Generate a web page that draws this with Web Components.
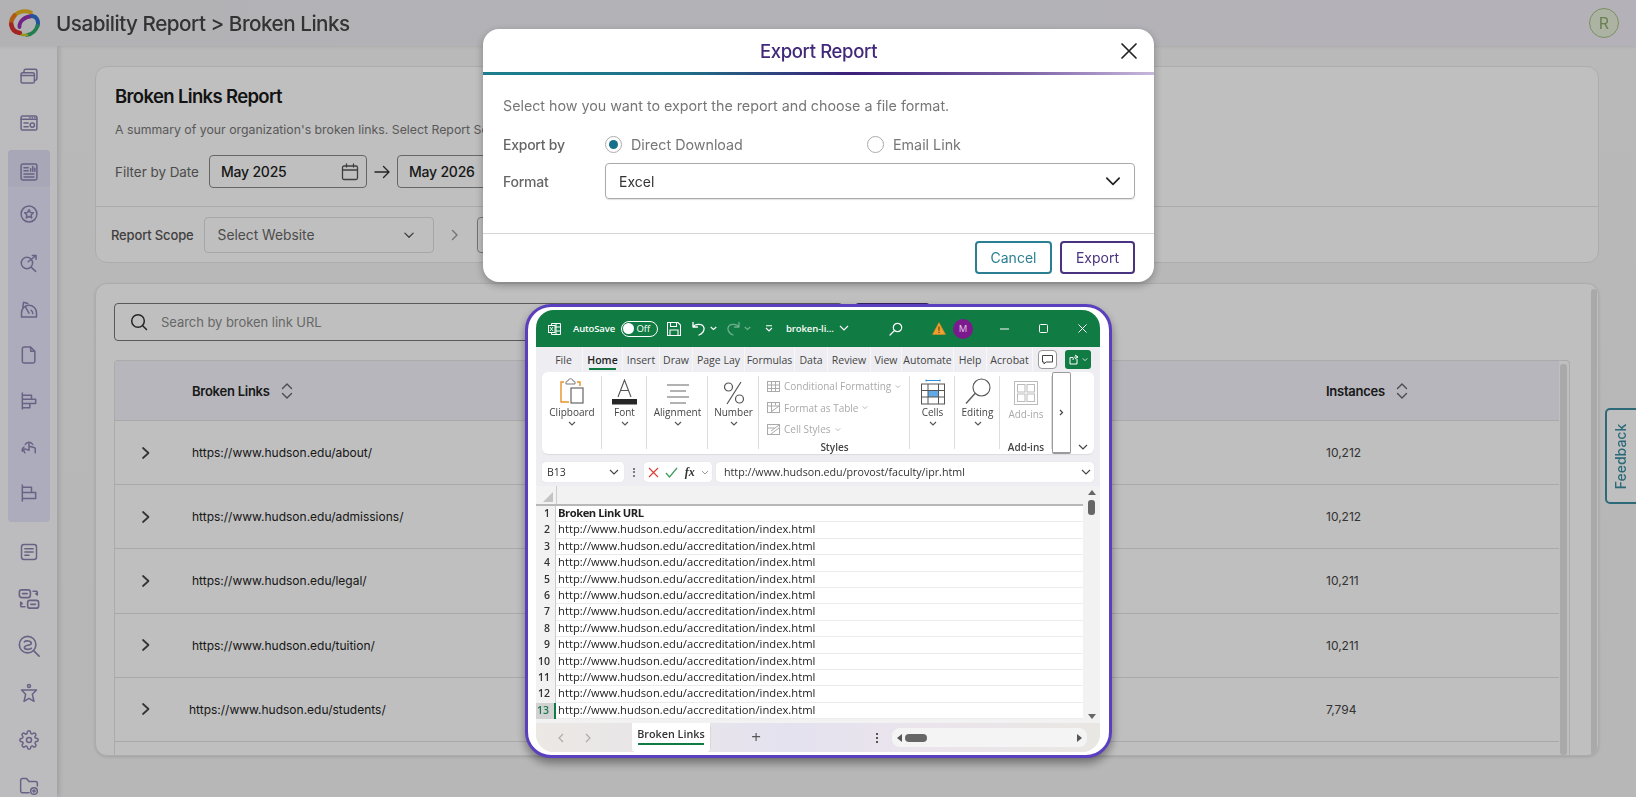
<!DOCTYPE html>
<html lang="en">
<head>
<meta charset="utf-8">
<title>Broken Links</title>
<style>
  html, body { margin: 0; height: 100%; overflow: hidden; background: #f7f7f7; font-family: Inter, "Liberation Sans", sans-serif; }
</style>
</head>
<body>
<app-shell>
  <app-header slot="header" heading="Usability Report &gt; Broken Links"></app-header>
  <side-nav slot="nav"></side-nav>
  <summary-card></summary-card>
  <table-card></table-card>
</app-shell>
<feedback-tab></feedback-tab>
<modal-backdrop>
  <export-modal></export-modal>
  <excel-preview></excel-preview>
</modal-backdrop>

<script>
// sidebar icons, all drawn on a 24 box
const NAV_ICONS = {
  stack: '<rect x="2.5" y="8" width="16" height="12.5" rx="2"/><path d="M2.5 11.5h16M6 8V6a2 2 0 0 1 2-2h11.5a2 2 0 0 1 2 2v9a2 2 0 0 1-2 2h-1"/>',
  panel: '<rect x="2.5" y="3.5" width="19" height="17" rx="2"/><path d="M2.5 7.5h19M6 12h5M6 16.5h5M13 5.5h.1M16 5.5h.1M19 5.5h.1"/><circle cx="16" cy="14.5" r="2.6"/>',
  report: '<rect x="2.5" y="2.5" width="19" height="19" rx="2"/><path d="M6 7h5M6 10.5h5M6 14.5h12M6 18h12M14 11V8M16.5 11V5.5M19 11V7.5"/>',
  starred: '<circle cx="12" cy="12" r="9.5"/><path d="M12 6.8l1.6 3.3 3.6.5-2.6 2.5.6 3.6-3.2-1.7-3.2 1.7.6-3.6-2.6-2.5 3.6-.5z"/>',
  seek: '<circle cx="9.500" cy="12" r="6.800"/><path d="M14.500 17l5.500 5M11 10.500L20.500 3M16 3h4.500v4.500"/>',
  gauge: '<path d="M3 21.500h18v-5a9 9 0 0 0-18 0zM12 17L8 10M16.500 17.500a4.500 4.500 0 0 0-2-4M4.500 10l1-6 5 1.500"/>',
  doc: '<path d="M6 2.5h8l5 5v12a2 2 0 0 1-2 2H6a2 2 0 0 1-2-2v-15a2 2 0 0 1 2-2zM14 2.5v5h5"/>',
  bars: '<path d="M4 2.500v19M4 5h11v5H4M4 10h16v5H4M4 15h9v5H4"/>',
  touch: '<path d="M7.500 9a5 5 0 0 1 9 0M12 7.500v8.500l-4-1.500c-2-.5-3 1-2 2.500l1 2M12 11l6 1.500a2 2 0 0 1 1.500 2v4.500M6 12c-1.500 1-2.500 3-2 5"/>',
  lines: '<path d="M4 2.500v19M4 5h11v6.500H4M4 11.500h16v7H4"/>',
  note: '<rect x="3" y="3" width="18" height="18" rx="3"/><path d="M7 8h10M7 12h10M7 16h5"/>',
  swap: '<rect x="1.500" y="2" width="12" height="8.500" rx="2.500"/><rect x="10.500" y="13.500" width="12" height="8.500" rx="2.500"/><path d="M5 6.200h5M14 17.800h5M16.500 3.500h3.500a1 1 0 0 1 1 1v3l-1.500-1.300M7.500 20.500H4a1 1 0 0 1-1-1v-4l1.500 1.500"/>',
  searchs: '<circle cx="10.500" cy="10.500" r="9"/><path d="M17 17l6 6M7 7.500c1-1.500 7.500-1.500 7.500 1.500S7 10.500 7 13.500s6.500 2.500 7.500 1"/>',
  person: '<circle cx="12" cy="3.500" r="1.800"/><path d="M3 8.500h18l-5 5 2 8.500-6-3.500L6 22l2-8.500z"/>',
  gear: '<circle cx="12" cy="12" r="3"/><path d="M19.400 15a1.650 1.650 0 0 0 .33 1.820l.06.06a2 2 0 0 1-2.830 2.830l-.06-.06a1.650 1.650 0 0 0-2.820 1.180V21a2 2 0 0 1-4 0v-.09a1.650 1.650 0 0 0-2.820-1.180l-.06.06a2 2 0 0 1-2.830-2.830l.06-.06a1.650 1.650 0 0 0-1.180-2.820H3a2 2 0 0 1 0-4h.09a1.650 1.650 0 0 0 1.180-2.820l-.06-.06a2 2 0 0 1 2.830-2.830l.06.06A1.650 1.650 0 0 0 9.920 3.090V3a2 2 0 0 1 4 0v.09a1.650 1.650 0 0 0 2.820 1.180l.06-.06a2 2 0 0 1 2.830 2.830l-.06.06a1.650 1.650 0 0 0 1.180 2.820H21a2 2 0 0 1 0 4h-.09a1.650 1.650 0 0 0-1.510 1z"/>',
  folder: '<path d="M12 20H4a2 2 0 0 1-2-2V5a2 2 0 0 1 2-2h5l3 3.500h8a2 2 0 0 1 2 2V12"/><circle cx="18" cy="18" r="4"/><circle cx="18" cy="18" r="1.300"/>'
};

function navIcon(name, size) {
  return `<svg width="${size}" height="${size}" viewBox="0 0 24 24" fill="none" stroke="currentColor" stroke-width="1.8" stroke-linecap="round" stroke-linejoin="round">${NAV_ICONS[name]}</svg>`;
}

const chevronDown = (w, color, sw) => `<svg width="${w}" height="${w}" viewBox="0 0 16 16" fill="none" stroke="${color}" stroke-width="${sw}" stroke-linecap="round" stroke-linejoin="round"><path d="M2.500 5.500L8 11l5.500-5.500"/></svg>`;
const sortIcon = `<svg width="14" height="18" viewBox="0 0 14 18" fill="none" stroke="#666" stroke-width="1.400" stroke-linecap="round" stroke-linejoin="round"><path d="M2.500 6.500L7 2l4.500 4.500M2.500 11.500L7 16l4.500-4.500"/></svg>`;

class AppShell extends HTMLElement {
  constructor() {
    super();
    this.attachShadow({ mode: 'open' });
    this.shadowRoot.innerHTML = `
      <style>
        :host { display: grid; grid-template-columns: 57px 1fr; grid-template-rows: 46px 1fr; height: 797px; width: 1636px; filter: blur(.4px); }
        .top { grid-column: 1 / 3; position: relative; z-index: 1; }
        .nav { box-shadow: 2px 0 5px rgba(0,0,0,.14); position: relative; }
        main { padding: 20px 37px 0 38px; display: flex; flex-direction: column; gap: 20px; min-width: 0; overflow: hidden;
               background: linear-gradient(180deg, #f7f7f7, #f4f4f4); }
      </style>
      <div class="top"><slot name="header"></slot></div>
      <div class="nav"><slot name="nav"></slot></div>
      <main><slot></slot></main>`;
  }
}

class AppHeader extends HTMLElement {
  constructor() {
    super();
    this.attachShadow({ mode: 'open' });
  }
  connectedCallback() {
    this.shadowRoot.innerHTML = `
      <style>
        :host { display: flex; align-items: center; height: 46px; padding: 0 17px 0 8px; box-sizing: border-box;
                background: linear-gradient(90deg, #eeeef2, #f0eef6); box-shadow: 0 1px 3px rgba(0,0,0,.08); position: relative; }
        svg.logo { flex: none; }
        h1 { margin: 0 0 0 15px; font: 500 20.700px Inter, sans-serif; letter-spacing: -.5px; color: #444; flex: 1; }
        .avatar { width: 30px; height: 30px; box-sizing: border-box; border-radius: 50%; border: 1.500px solid #a3bd85; background: #e6efd9; color: #8eaa6e;
                  display: flex; align-items: center; justify-content: center; font: 400 16px Inter, sans-serif; }
      </style>
      <svg class="logo" width="33" height="30" viewBox="0 0 33 30" fill="none" stroke-linecap="round">
        <path d="M23 4.500C17 2 10 3.500 6.500 7.500" stroke="#e8b420" stroke-width="4"/>
        <path d="M6.500 7.500C4 10.500 2.800 13.500 3.200 16.500" stroke="#ea7a1e" stroke-width="4.500"/>
        <path d="M3.200 16.500C4 21 7 24.500 12 25" stroke="#d9322e" stroke-width="4.500"/>
        <path d="M11.500 19C11 13 17 8.500 24 8" stroke="#9a2fb0" stroke-width="3.800"/>
        <path d="M24 8C29 8.500 31 13 29.500 18" stroke="#2f6fd0" stroke-width="4"/>
        <path d="M29.500 18C28 22.500 24.500 26 19 27" stroke="#2fa868" stroke-width="3.800"/>
        <path d="M19 27L14 27" stroke="#c8c82a" stroke-width="2.500"/>
      </svg>
      <h1>${this.getAttribute('heading')}</h1>
      <div class="avatar">R</div>`;
  }
}

class SideNav extends HTMLElement {
  constructor() {
    super();
    this.attachShadow({ mode: 'open' });
  }
  connectedCallback() {
    const item = (n, s) => `<div class="item">${navIcon(n, s || 20)}</div>`;
    this.shadowRoot.innerHTML = `
      <style>
        :host { display: flex; flex-direction: column; align-items: center; height: 751px; box-sizing: border-box; padding-top: 7px; background: #fbfbfe; color: #8d83b1; overflow: hidden; }
        .item { height: 46.500px; width: 100%; display: flex; align-items: center; justify-content: center; flex: none; }
        .group { width: 42px; margin: 4px 0 7px; height: 372px; background: #e6e6fb; border-radius: 4px; display: flex; flex-direction: column; overflow: hidden; flex: none; }
        .group .item { height: 46px; }
        .group .item:first-child { height: 38px; padding-top: 6px; background: #dfdff5; border-bottom: 1px solid #e9e9f3; box-sizing: border-box; }
        .group .item:nth-child(2) { height: 52px; }
        .tail { width: 100%; display: flex; flex-direction: column; }
        .tail .item { height: 46.800px; }
      </style>
      ${item('stack')}${item('panel')}
      <div class="group">
        ${item('report')}${item('starred')}${item('seek')}${item('gauge')}${item('doc')}${item('bars')}${item('touch')}${item('lines')}
      </div>
      <div class="tail">
        ${item('note')}${item('swap', 22)}${item('searchs', 22)}${item('person')}${item('gear')}${item('folder')}
      </div>`;
  }
}

class SummaryCard extends HTMLElement {
  constructor() {
    super();
    this.attachShadow({ mode: 'open' });
    const cal = `<svg width="18" height="18" viewBox="0 0 18 18" fill="none" stroke="#555" stroke-width="1.300" stroke-linecap="round"><rect x="1.500" y="3" width="15" height="13.500" rx="1.500"/><path d="M1.500 7h15M5.500 1v3M12.500 1v3"/></svg>`;
    this.shadowRoot.innerHTML = `
      <style>
        :host { display: block; height: 197px; box-sizing: border-box; background: #fff; border: 1px solid #e6e6e6; border-radius: 12px; font-family: Inter, sans-serif; color: #222; flex: none; overflow: hidden; }
        .top { height: 140px; box-sizing: border-box; padding: 17px 0 0 19px; border-bottom: 1px solid #e3e3e3; }
        h2 { margin: 0; font: 600 18.500px/25px Inter, sans-serif; letter-spacing: -.65px; color: #1a1a1a; }
        p { margin: 12px 0 0; font-size: 12.300px; line-height: 18px; color: #777; white-space: nowrap; }
        .filter { display: flex; align-items: center; margin-top: 16px; font-size: 13.400px; color: #666; }
        .date { height: 33px; box-sizing: border-box; width: 158px; margin-left: 10px; border: 1.500px solid #8a8a8a; border-radius: 4px; display: flex; align-items: center; justify-content: space-between; padding: 0 7px 0 11px; color: #222; font-weight: 500; font-size: 14px; letter-spacing: -.2px; }
        .arrow { margin: 0 7px; display: flex; }
        .filter .date + .arrow + .date { margin-left: 0; }
        .scope { display: flex; align-items: center; height: 56px; padding-left: 15px; font-size: 13px; font-weight: 500; color: #555; letter-spacing: -.15px; }
        .sel { height: 36px; box-sizing: border-box; width: 230px; margin-left: 10px; border: 1px solid #dedede; border-radius: 4px; display: flex; align-items: center; justify-content: space-between; padding: 0 18px 0 13px; font-weight: 400; font-size: 13.800px; color: #666; letter-spacing: 0; }
        .crumb { margin: 0 18px 0 17px; color: #aaa; display: flex; }
        .next { width: 230px; height: 36px; box-sizing: border-box; border: 1.500px solid #999; border-radius: 4px; }
      </style>
      <div class="top">
        <h2>Broken Links Report</h2>
        <p>A summary of your organization's broken links. Select Report Scope to narrow down the results.</p>
        <div class="filter">Filter by Date
          <div class="date">May 2025 ${cal}</div>
          <div class="arrow"><svg width="16" height="14" viewBox="0 0 16 14" fill="none" stroke="#333" stroke-width="1.400" stroke-linecap="round" stroke-linejoin="round"><path d="M1 7h14M9.500 1.500L15 7l-5.500 5.500"/></svg></div>
          <div class="date">May 2026 ${cal}</div>
        </div>
      </div>
      <div class="scope">Report Scope
        <div class="sel">Select Website ${chevronDown(12, '#555', 1.800)}</div>
        <div class="crumb"><svg width="8" height="12" viewBox="0 0 8 12" fill="none" stroke="#999" stroke-width="1.300" stroke-linecap="round"><path d="M1.500 1.500L6 6l-4.500 4.500"/></svg></div>
        <div class="next"></div>
      </div>`;
  }
}

const LINK_ROWS = [
  ['https://www.hudson.edu/about/', '10,212'],
  ['https://www.hudson.edu/admissions/', '10,212'],
  ['https://www.hudson.edu/legal/', '10,211'],
  ['https://www.hudson.edu/tuition/', '10,211'],
  ['https://www.hudson.edu/students/', '7,794']
];

class TableCard extends HTMLElement {
  constructor() {
    super();
    this.attachShadow({ mode: 'open' });
  }
  connectedCallback() {
    const rows = LINK_ROWS.map((r, i) => `
      <div class="row">
        <span class="chev"><svg width="10" height="14" viewBox="0 0 10 14" fill="none" stroke="#444" stroke-width="1.700" stroke-linecap="round" stroke-linejoin="round"><path d="M2 2l5.500 5L2 12"/></svg></span>
        <span class="url${i === 4 ? ' shift' : ''}">${r[0]}</span>
        <span class="num">${r[1]}</span>
      </div>`).join('');
    this.shadowRoot.innerHTML = `
      <style>
        :host { display: flex; height: 473px; box-sizing: border-box; background: #fff; border: 1px solid #e6e6e6; border-radius: 12px; font-family: Inter, sans-serif; overflow: hidden; flex: none; box-shadow: 0 1px 3px rgba(0,0,0,.12); }
        .body { flex: 1; min-width: 0; padding: 19px 21px 0 18px; display: flex; flex-direction: column; }
        .bar { width: 6px; margin: 5px 1px 0 0; background: #e2e2e2; border-radius: 3px; }
        .tools { display: flex; height: 38px; flex: none; }
        .search { width: 729px; box-sizing: border-box; border: 1.500px solid #777; border-radius: 4px; display: flex; align-items: center; padding-left: 15px; gap: 13px; font-size: 13px; letter-spacing: -.05px; color: #8a8a8a; }
        .action { width: 75px; margin-left: 12px; box-sizing: border-box; border: 2px solid #49327f; border-radius: 4px; }
        .table { margin-top: 19px; flex: 1; min-height: 0; display: flex; border: 1px solid #e4e4e4; border-bottom: 0; border-radius: 4px 4px 0 0; overflow: hidden; }
        .rows { flex: 1; min-width: 0; }
        .tbar { width: 7px; margin: 3px 2px 0 1px; background: #e2e2e2; border-radius: 3px; }
        .row, .head { display: grid; grid-template-columns: 77px 1fr 233px; align-items: center; border-bottom: 1px solid #e2e2e2; box-sizing: border-box; }
        .head { height: 60px; background: #f3f3fb; font-weight: 600; font-size: 13px; letter-spacing: -.25px; color: #222; }
        .head span { display: flex; align-items: center; gap: 10px; }
        .head .first { grid-column: 2; }
        .row { height: 64.200px; font-size: 12px; letter-spacing: 0; color: #222; }
        .chev { padding-left: 26px; display: flex; }
        .shift { margin-left: -3px; }
        .num { color: #444; }
      </style>
      <div class="body">
        <div class="tools">
          <div class="search"><svg width="18" height="18" viewBox="0 0 18 18" fill="none" stroke="#333" stroke-width="1.500" stroke-linecap="round"><circle cx="8" cy="8" r="6.300"/><path d="M12.700 12.700L16.500 16.500"/></svg>Search by broken link URL</div>
          <div class="action"></div>
        </div>
        <div class="table">
          <div class="rows">
            <div class="head"><span class="first">Broken Links ${sortIcon}</span><span>Instances ${sortIcon}</span></div>
            ${rows}
            <div class="row"></div>
          </div>
          <div class="tbar"></div>
        </div>
      </div>
      <div class="bar"></div>`;
  }
}

class FeedbackTab extends HTMLElement {
  constructor() {
    super();
    this.attachShadow({ mode: 'open' });
    this.shadowRoot.innerHTML = `
      <style>
        :host { position: absolute; left: 1605px; top: 408px; width: 33px; height: 96px; box-sizing: border-box; background: #fff; border: 2px solid #3b8ea3; border-radius: 5px 0 0 5px;
                display: flex; align-items: center; justify-content: center; font: 500 14px Inter, sans-serif; color: #3b8ea3; filter: blur(.3px); }
        span { transform: rotate(-90deg); white-space: nowrap; margin-left: -1px; }
      </style>
      <span>Feedback</span>`;
  }
}

class ModalBackdrop extends HTMLElement {
  constructor() {
    super();
    this.attachShadow({ mode: 'open' });
    this.shadowRoot.innerHTML = `
      <style>:host { position: absolute; inset: 0; background: rgba(0,0,0,.25); }</style>
      <slot></slot>`;
  }
}

class ExportModal extends HTMLElement {
  constructor() {
    super();
    this.attachShadow({ mode: 'open' });
    this.shadowRoot.innerHTML = `
      <style>
        :host { position: absolute; left: 483px; top: 29px; width: 671px; height: 253px; background: #fff; border-radius: 16px; box-shadow: 0 3px 8px rgba(0,0,0,.3); overflow: hidden; font-family: Inter, sans-serif; display: flex; flex-direction: column; }
        header { height: 43px; flex: none; display: flex; align-items: center; justify-content: center; position: relative; font-weight: 500; font-size: 18.500px; letter-spacing: -.35px; color: #41287a; }
        .x { position: absolute; right: 16px; top: 13px; display: flex; }
        .rule { height: 3px; flex: none; background: linear-gradient(90deg, #1d7f8d 0%, #1f6f86 30%, #3c1f7a 55%, #7a5fa5 80%, #c8b8dc 100%); }
        .body { flex: 1; padding: 19px 19px 0 20px; color: #777; font-size: 14.300px; }
        .intro { line-height: 24px; letter-spacing: -.02px; }
        .line { display: grid; grid-template-columns: 102px 262px 1fr; align-items: center; margin-top: 12px; height: 28px; }
        .label { font-weight: 500; font-size: 14px; color: #666; letter-spacing: -.25px; }
        .opt { display: flex; align-items: center; gap: 9px; }
        .dot { width: 17px; height: 17px; box-sizing: border-box; border: 1.500px solid #aaa; border-radius: 50%; display: flex; align-items: center; justify-content: center; background: #fff; }
        .dot.on::after { content: ""; width: 9px; height: 9px; border-radius: 50%; background: #17708a; }
        .format { display: grid; grid-template-columns: 102px 1fr; align-items: center; margin-top: 5px; }
        .select { height: 36px; box-sizing: border-box; border: 1.500px solid #aaa; border-radius: 4px; display: flex; align-items: center; justify-content: space-between; padding: 0 12px 0 13px; color: #333; font-size: 14px; box-shadow: 0 1px 1px rgba(0,0,0,.12); }
        footer { height: 49px; flex: none; box-sizing: border-box; border-top: 1.500px solid #d5d5d5; display: flex; justify-content: flex-end; align-items: flex-start; padding: 7px 19px 0 0; gap: 8px; }
        .btn { height: 33px; box-sizing: border-box; border-radius: 4px; display: flex; align-items: center; justify-content: center; font-size: 14px; }
        .cancel { width: 77px; border: 2px solid #2c7f93; color: #2c7f93; }
        .export { width: 75px; border: 2px solid #49327f; color: #49327f; }
      </style>
      <header>Export Report
        <span class="x"><svg width="18" height="18" viewBox="0 0 18 18" stroke="#222" stroke-width="1.700" stroke-linecap="round"><path d="M2 2l14 14M16 2L2 16"/></svg></span>
      </header>
      <div class="rule"></div>
      <div class="body">
        <div class="intro">Select how you want to export the report and choose a file format.</div>
        <div class="line">
          <span class="label">Export by</span>
          <span class="opt"><i class="dot on"></i>Direct Download</span>
          <span class="opt"><i class="dot"></i>Email Link</span>
        </div>
        <div class="format">
          <span class="label">Format</span>
          <div class="select">Excel ${chevronDown(18, '#222', 1.500)}</div>
        </div>
      </div>
      <footer><div class="btn cancel">Cancel</div><div class="btn export">Export</div></footer>`;
  }
}

class ExcelPreview extends HTMLElement {
  constructor() {
    super();
    this.attachShadow({ mode: 'open' });
  }
  connectedCallback() {
    const url = 'http://www.hudson.edu/accreditation/index.html';
    let rows = `<div class="r"><span class="n">1</span><span class="c"><b>Broken Link URL</b></span></div>`;
    for (let i = 2; i <= 13; i++) {
      rows += `<div class="r${i === 13 ? ' sel' : ''}"><span class="n">${i}</span><span class="c">${url}</span></div>`;
    }
    const caret = `<svg width="8" height="5" viewBox="0 0 8 5" fill="none" stroke="#555" stroke-width="1.100"><path d="M1 1l3 3 3-3"/></svg>`;
    const tabs = ['File', 'Home', 'Insert', 'Draw', 'Page Lay', 'Formulas', 'Data', 'Review', 'View', 'Automate', 'Help', 'Acrobat'];
    const tabW = [38, 40, 37, 33, 52, 50, 33, 43, 31, 52, 33, 46];
    this.shadowRoot.innerHTML = `
      <style>
        :host { position: absolute; left: 525px; top: 304px; width: 587px; height: 454px; box-sizing: border-box; background: #fff; border: 3px solid #5a3fbe; border-radius: 26px; padding: 3px 9px 3px 8px; box-shadow: 0 5px 10px rgba(0,0,0,.4); font-family: "Open Sans", sans-serif; font-size: 10.500px; color: #333; }
        .win { height: 100%; background: #eeeef2; border-radius: 18px; overflow: hidden; display: flex; flex-direction: column; }
        .title { height: 37px; flex: none; background: #107b43; color: #fff; display: flex; align-items: center; padding-left: 12px; position: relative; }
        .title > * { flex: none; }
        .auto { margin-left: 12px; font-weight: 600; font-size: 9.500px; letter-spacing: -.15px; }
        .toggle { margin-left: 6px; width: 37px; height: 16px; box-sizing: border-box; border: 1.300px solid #fff; border-radius: 9px; display: flex; align-items: center; padding-left: 1.500px; gap: 2px; font-size: 9.500px; }
        .toggle i { width: 11px; height: 11px; border-radius: 50%; background: #fff; }
        .fname { margin-left: 13px; font-weight: 600; width: 52px; font-size: 9.500px; letter-spacing: -.1px; white-space: nowrap; }
        .tabs { height: 25px; flex: none; display: flex; align-items: center; padding-left: 9px; position: relative; font-size: 10.500px; }
        .tab { height: 25px; display: flex; align-items: center; justify-content: center; position: relative; border-right: 1px solid #f7f7f9; box-sizing: border-box; color: #444; white-space: nowrap; overflow: hidden; flex: none; }
        .tab.on { color: #222; font-weight: 600; }
        .tab.on::after { content: ""; position: absolute; left: 6px; right: 6px; bottom: 2px; height: 2px; background: #107b43; }
        .cmt { margin-left: 5px; width: 19px; height: 19px; box-sizing: border-box; background: #fff; border: 1px solid #999; border-radius: 4px; display: flex; align-items: center; justify-content: center; flex: none; }
        .share { margin-left: 8px; width: 26px; height: 19px; background: #107b43; border-radius: 3px; display: flex; align-items: center; justify-content: center; gap: 2px; flex: none; }
        .ribbon { margin: 0 6px; height: 82px; flex: none; background: #fff; border-radius: 6px; display: flex; box-shadow: 0 1px 1px rgba(0,0,0,.08); position: relative; font-size: 10px; }
        .grp { display: flex; flex-direction: column; align-items: center; position: relative; flex: none; }
        .grp::after { content: ""; position: absolute; right: 0; top: 4px; bottom: 5px; width: 1px; background: #dcdcdc; }
        .grp .ic { height: 30px; margin-top: 3px; display: flex; align-items: flex-end; justify-content: center; }
        .grp .lb { margin-top: 0; line-height: 14px; color: #444; }
        .grp .cr { margin-top: 2px; display: flex; }
        .styles { align-items: flex-start; padding-left: 8px; color: #aaa; gap: 5.500px; padding-top: 6px; box-sizing: border-box; }
        .styles .rw { display: flex; align-items: center; gap: 4px; height: 16px; white-space: nowrap; }
        .tag { position: absolute; bottom: 0; left: 0; right: 0; text-align: center; font-weight: 600; color: #444; line-height: 14px; }
        .more { width: 19px; flex: none; box-sizing: border-box; border: 1px solid #9a9a9a; border-bottom-width: 2px; border-radius: 2px; display: flex; align-items: center; justify-content: center; }
        .coll { flex: 1; display: flex; align-items: flex-end; justify-content: center; padding-bottom: 3px; }
        .fbar { margin: 8px 6px 0; height: 20px; flex: none; display: flex; gap: 4px; align-items: stretch; font-size: 10.500px; }
        .box { background: #fff; border-radius: 4px; display: flex; align-items: center; box-shadow: 0 0 1px rgba(0,0,0,.15); box-sizing: border-box; }
        .dots { width: 8px; display: flex; flex-direction: column; align-items: center; justify-content: center; gap: 1.500px; margin: 0 2px; }
        .dots i { width: 2px; height: 2px; background: #555; border-radius: 50%; }
        .sheet { flex: 1; min-height: 0; margin-top: 4px; display: flex; background: #f2f2f2; }
        .cells { flex: none; width: 547px; display: flex; flex-direction: column; overflow: hidden; }
        .colh { height: 20px; flex: none; display: flex; border-bottom: 2px solid #b8b8b8; box-sizing: border-box; }
        .corner { width: 20px; border-right: 1px solid #ccc; position: relative; }
        .corner::after { content: ""; position: absolute; right: 3px; bottom: 2px; border-style: solid; border-width: 0 0 10px 10px; border-color: transparent transparent #c4c4c4 transparent; }
        .r { height: 16.400px; flex: none; display: flex; box-sizing: border-box; font-size: 11.200px; line-height: 14.500px; color: #222; font-family: "Open Sans", sans-serif; }
        .n { width: 20px; flex: none; text-align: right; padding-right: 5px; box-sizing: border-box; background: #f2f2f2; font-weight: 600; font-size: 10.500px; color: #333; border-right: 1px solid #ccc; }
        .c { flex: 1; background: #fff; padding-left: 2px; border-bottom: 1.500px solid #ececec; letter-spacing: .03px; white-space: nowrap; }
        .c b { font-weight: 700; letter-spacing: -.45px; }
        .sel .n { background: #d2d2d2; color: #1d7a4a; border-right: 2px solid #107b43; }
        .vs { flex: 1; position: relative; display: flex; flex-direction: column; align-items: center; }
        .up, .dn { width: 0; height: 0; border-left: 4px solid transparent; border-right: 4px solid transparent; }
        .up { margin-top: 4px; border-bottom: 5px solid #666; }
        .dn { border-top: 5px solid #666; margin-top: 199px; }
        .thumb { width: 7px; height: 15px; margin-top: 5px; background: #666; border-radius: 3px; }
        .foot { height: 29px; flex: none; display: flex; align-items: stretch; background: linear-gradient(90deg, #ece8e4, #e4e2ef 45%, #ebe4ec 70%, #e9e7e2); position: relative; }
        .nav { width: 96px; flex: none; display: flex; align-items: center; gap: 21px; padding-left: 22px; box-sizing: border-box; }
        .stab { width: 78px; flex: none; background: #fff; border-radius: 0 0 4px 4px; display: flex; flex-direction: column; align-items: center; font-weight: 600; font-size: 10.800px; color: #333; padding-top: 3px; box-sizing: border-box; line-height: 16px; }
        .stab i { width: 66px; height: 2px; background: #107b43; margin-top: 1px; }
        .plus { width: 91px; flex: none; text-align: center; font-size: 17px; color: #555; border-left: 1px solid #d8d8d8; margin: 3px 0; line-height: 22px; box-sizing: border-box; }
        .vd { flex: none; margin-left: 75px; display: flex; flex-direction: column; justify-content: center; gap: 2px; }
        .vd i { width: 2px; height: 2px; background: #555; }
        .hs { margin: 5px 0 5px 14px; width: 195px; flex: none; background: #f4f4f4; border-radius: 8px; display: flex; align-items: center; padding: 0 5px; box-sizing: border-box; }
        .hs .l { border-style: solid; border-width: 4px 5px 4px 0; border-color: transparent #555 transparent transparent; }
        .hs .t { width: 22px; height: 8px; background: #666; border-radius: 4px; margin-left: 3px; }
        .hs .rr { margin-left: auto; border-style: solid; border-width: 4px 0 4px 5px; border-color: transparent transparent transparent #555; }
      </style>
      <div class="win">
        <div class="title">
          <svg width="13" height="14" viewBox="0 0 13 14" fill="none" stroke="#fff" stroke-width="1"><path d="M3.500 3V1.500h9v11h-9V11M8 1.500V12.500M3.500 5h9M8 9h4.500"/><rect x=".5" y="3.500" width="6.500" height="7" fill="#107b43"/><path d="M2 5l3 4M5 5L2 9" stroke-width=".9"/></svg>
          <span class="auto">AutoSave</span>
          <span class="toggle"><i></i>Off</span>
          <svg style="margin-left:9px" width="14" height="14" viewBox="0 0 14 14" fill="none" stroke="#fff" stroke-width="1.100"><path d="M.5 .5h10.500l2.500 2.500v10.500H.5zM3.500 .5v4h6v-4M3 13.500V8h8v5.500"/></svg>
          <svg style="margin-left:11px" width="13" height="15" viewBox="0 0 13 15" fill="none" stroke="#fff" stroke-width="1.300" stroke-linecap="round" stroke-linejoin="round"><path d="M1 1.500v4.500h4.500M1 6c2-3.500 10-4 11 1 .5 3-2 6-5 7"/></svg>
          <svg style="margin-left:5px" width="7" height="5" viewBox="0 0 7 5" fill="none" stroke="#fff" stroke-width="1.200"><path d="M.7 1l2.800 2.500L6.300 1"/></svg>
          <svg style="margin-left:10px;opacity:.4" width="13" height="15" viewBox="0 0 13 15" fill="none" stroke="#fff" stroke-width="1.300" stroke-linecap="round" stroke-linejoin="round"><path d="M12 1.500v4.500H7.500M12 6C10 2.500 2 2 1 7c-.5 3 2 6 5 7"/></svg>
          <svg style="margin-left:4px;opacity:.4" width="7" height="5" viewBox="0 0 7 5" fill="none" stroke="#fff" stroke-width="1.200"><path d="M.7 1l2.800 2.500L6.300 1"/></svg>
          <svg style="margin-left:14px" width="8" height="7" viewBox="0 0 8 7" fill="none" stroke="#fff" stroke-width="1.100"><path d="M1 .8h6M1 3l3 3 3-3"/></svg>
          <span class="fname">broken-li...</span>
          <svg style="margin-left:1px" width="10" height="7" viewBox="0 0 10 7" fill="none" stroke="#fff" stroke-width="1.200"><path d="M1 1l4 4 4-4"/></svg>
          <svg style="margin-left:40px" width="14" height="14" viewBox="0 0 14 14" fill="none" stroke="#fff" stroke-width="1.200" stroke-linecap="round"><circle cx="8.500" cy="5.500" r="4.200"/><path d="M5.500 8.500L1 13"/></svg>
          <svg style="margin-left:29px" width="14" height="13" viewBox="0 0 14 13"><path d="M7 .5l6.500 12H.5z" fill="#f0a030" stroke="#e08a20" stroke-width=".5"/><path d="M7 4.500v4.200M7 9.800v1.200" stroke="#5a3a00" stroke-width="1.100"/></svg>
          <span style="margin-left:7px;width:20px;height:20px;border-radius:50%;background:#7b1a8d;display:flex;align-items:center;justify-content:center;font-size:9.500px;color:#e5c9ea">M</span>
          <svg style="margin-left:27px" width="9" height="2" viewBox="0 0 9 2"><path d="M0 1h9" stroke="#fff" stroke-width="1"/></svg>
          <svg style="margin-left:30px" width="9" height="9" viewBox="0 0 9 9" fill="none" stroke="#fff" stroke-width="1"><rect x=".5" y=".5" width="8" height="8" rx="1"/></svg>
          <svg style="margin-left:30px" width="9" height="9" viewBox="0 0 9 9" stroke="#fff" stroke-width="1"><path d="M.5 .5l8 8M8.500 .5l-8 8"/></svg>
        </div>
        <div class="tabs">
          ${tabs.map((t, i) => `<div class="tab${t === 'Home' ? ' on' : ''}" style="width:${tabW[i]}px">${t}</div>`).join('')}
          <div class="cmt"><svg width="11" height="10" viewBox="0 0 11 10" fill="none" stroke="#444" stroke-width="1"><path d="M.5 .5h10v6.500H4l-2 2V7H.5z"/></svg></div>
          <div class="share"><svg width="11" height="11" viewBox="0 0 11 11" fill="none" stroke="#fff" stroke-width="1"><path d="M8 5v5H1V3.500h3M6 1l3 2-3 2M9 3H6.500C5 3 4 4 4 6"/></svg>${caret.replace('#555', '#fff').replace('width="8"', 'width="6"')}</div>
        </div>
        <div class="ribbon">
          <div class="grp" style="width:60px">
            <div class="ic"><svg width="26" height="28" viewBox="0 0 26 28" fill="none"><path d="M5 5H2v20h8M18 5h3v4" stroke="#e8912a" stroke-width="1.400"/><path d="M7 5c0-1 2-1 2-1 0-3 5-3 5 0 0 0 2 0 2 1v2H7z" fill="#fff" stroke="#777"/><rect x="12" y="11" width="12" height="15" fill="#fff" stroke="#666" stroke-width="1.200"/></svg></div>
            <span class="lb">Clipboard</span><span class="cr">${caret}</span>
          </div>
          <div class="grp" style="width:45px">
            <div class="ic"><svg width="27" height="26" viewBox="0 0 27 26" fill="none"><path d="M7 18L13.500 1 20 18M9.500 11.500h8" stroke="#555" stroke-width="1.100"/><rect x="1" y="20" width="25" height="5.500" fill="#262626"/></svg></div>
            <span class="lb">Font</span><span class="cr">${caret}</span>
          </div>
          <div class="grp" style="width:61px">
            <div class="ic"><svg width="24" height="22" viewBox="0 0 24 22" stroke="#666" stroke-width="1.100"><path d="M1 2h22M4 8h16M1 14h22M4 20h16"/></svg></div>
            <span class="lb">Alignment</span><span class="cr">${caret}</span>
          </div>
          <div class="grp" style="width:51px">
            <div class="ic"><svg width="22" height="24" viewBox="0 0 22 24" fill="none" stroke="#555" stroke-width="1.200"><circle cx="5.500" cy="6" r="4"/><circle cx="16.500" cy="18" r="4"/><path d="M18 1L4 23"/></svg></div>
            <span class="lb">Number</span><span class="cr">${caret}</span>
          </div>
          <div class="grp styles" style="width:151px">
            <div class="rw"><svg width="13" height="11" viewBox="0 0 13 11" fill="none" stroke="#aaa"><rect x=".5" y=".5" width="12" height="10"/><path d="M.5 4h12M.5 7.500h12M4.500 .5v10M8.500 .5v10"/></svg>Conditional Formatting ${caret.replace('#555', '#aaa').replace('width="8"', 'width="6"')}</div>
            <div class="rw"><svg width="13" height="11" viewBox="0 0 13 11" fill="none" stroke="#aaa"><rect x=".5" y=".5" width="12" height="10"/><path d="M.5 4h12M4.500 .5v10M8.500 .5v3M4 10l8-6"/></svg>Format as Table ${caret.replace('#555', '#aaa').replace('width="8"', 'width="6"')}</div>
            <div class="rw"><svg width="13" height="11" viewBox="0 0 13 11" fill="none" stroke="#aaa"><rect x=".5" y=".5" width="12" height="10"/><path d="M.5 4h7M4 7l8-6M4 10l8-6"/></svg>Cell Styles ${caret.replace('#555', '#aaa').replace('width="8"', 'width="6"')}</div>
            <span class="tag">Styles</span>
          </div>
          <div class="grp" style="width:45px">
            <div class="ic"><svg width="24" height="26" viewBox="0 0 24 26" fill="none" stroke="#555"><path d="M5 1.500h14M5 .5v2M19 .5v2" stroke="#2f8fd8"/><rect x="7" y="12" width="11" height="6" fill="#62a9e6" stroke="none"/><rect x=".5" y="5" width="23" height="20"/><path d="M.5 11.500h23M.5 18h23M7 5v20M17.500 5v20"/></svg></div>
            <span class="lb">Cells</span><span class="cr">${caret}</span>
          </div>
          <div class="grp" style="width:45px">
            <div class="ic"><svg width="26" height="27" viewBox="0 0 26 27" fill="none" stroke="#555" stroke-width="1.100"><circle cx="16.500" cy="9.500" r="8.500"/><path d="M10 15.500L1 25.500" stroke-width="1.300"/></svg></div>
            <span class="lb">Editing</span><span class="cr">${caret}</span>
          </div>
          <div class="grp" style="width:52px;color:#aaa">
            <div class="ic"><svg width="24" height="24" viewBox="0 0 24 24" fill="#fff" stroke="#bbb"><rect x=".5" y=".5" width="23" height="23"/><rect x="3.500" y="3.500" width="7.500" height="7.500"/><rect x="13" y="3.500" width="7.500" height="7.500"/><rect x="3.500" y="13" width="7.500" height="7.500"/><rect x="13" y="13" width="7.500" height="7.500"/></svg></div>
            <span class="lb" style="color:#aaa;margin-top:2px">Add-ins</span>
            <span class="tag">Add-ins</span>
          </div>
          <div class="more"><svg width="5" height="7" viewBox="0 0 5 7" fill="none" stroke="#444" stroke-width="1.200"><path d="M1 1l2.500 2.500L1 6"/></svg></div>
          <div class="coll"><svg width="10" height="7" viewBox="0 0 10 7" fill="none" stroke="#444" stroke-width="1.200"><path d="M1 1l4 4 4-4"/></svg></div>
        </div>
        <div class="fbar">
          <div class="box" style="width:82px;justify-content:space-between;padding:0 5px 0 5px">B13 <svg width="10" height="6" viewBox="0 0 10 6" fill="none" stroke="#444" stroke-width="1.100"><path d="M1 1l4 4 4-4"/></svg></div>
          <div class="dots"><i></i><i></i><i></i></div>
          <div class="box" style="width:68px;justify-content:space-between;padding:0 3px 0 4px;gap:2px">
            <svg width="11" height="11" viewBox="0 0 11 11" stroke="#d9403a" stroke-width="1.200"><path d="M1 1l9 9M10 1l-9 9"/></svg>
            <svg width="13" height="11" viewBox="0 0 13 11" fill="none" stroke="#3f9a5d" stroke-width="1.200"><path d="M1 6l3.500 4L12 1"/></svg>
            <i style="font:italic 700 12px 'Liberation Serif',serif;color:#333">fx</i>
            <svg width="8" height="5" viewBox="0 0 8 5" fill="none" stroke="#999"><path d="M1 1l3 3 3-3"/></svg>
          </div>
          <div class="box" style="flex:1;justify-content:space-between;padding:0 3px 0 8px;font-size:10.700px">http://www.hudson.edu/provost/faculty/ipr.html <svg width="10" height="6" viewBox="0 0 10 6" fill="none" stroke="#444" stroke-width="1.100"><path d="M1 1l4 4 4-4"/></svg></div>
        </div>
        <div class="sheet">
          <div class="cells">
            <div class="colh"><div class="corner"></div></div>
            ${rows}
          </div>
          <div class="vs"><div class="up"></div><div class="thumb"></div><div class="dn"></div></div>
        </div>
        <div class="foot">
          <div class="nav">
            <svg width="6" height="10" viewBox="0 0 6 10" fill="none" stroke="#aaa" stroke-width="1.100"><path d="M5 1L1 5l4 4"/></svg>
            <svg width="6" height="10" viewBox="0 0 6 10" fill="none" stroke="#aaa" stroke-width="1.100"><path d="M1 1l4 4-4 4"/></svg>
          </div>
          <div class="stab">Broken Links<i></i></div>
          <div class="plus">+</div>
          <div class="vd"><i></i><i></i><i></i></div>
          <div class="hs"><span class="l"></span><span class="t"></span><span class="rr"></span></div>
        </div>
      </div>`;
  }
}

customElements.define('app-shell', AppShell);
customElements.define('app-header', AppHeader);
customElements.define('side-nav', SideNav);
customElements.define('summary-card', SummaryCard);
customElements.define('table-card', TableCard);
customElements.define('feedback-tab', FeedbackTab);
customElements.define('modal-backdrop', ModalBackdrop);
customElements.define('export-modal', ExportModal);
customElements.define('excel-preview', ExcelPreview);
</script>
</body>
</html>
